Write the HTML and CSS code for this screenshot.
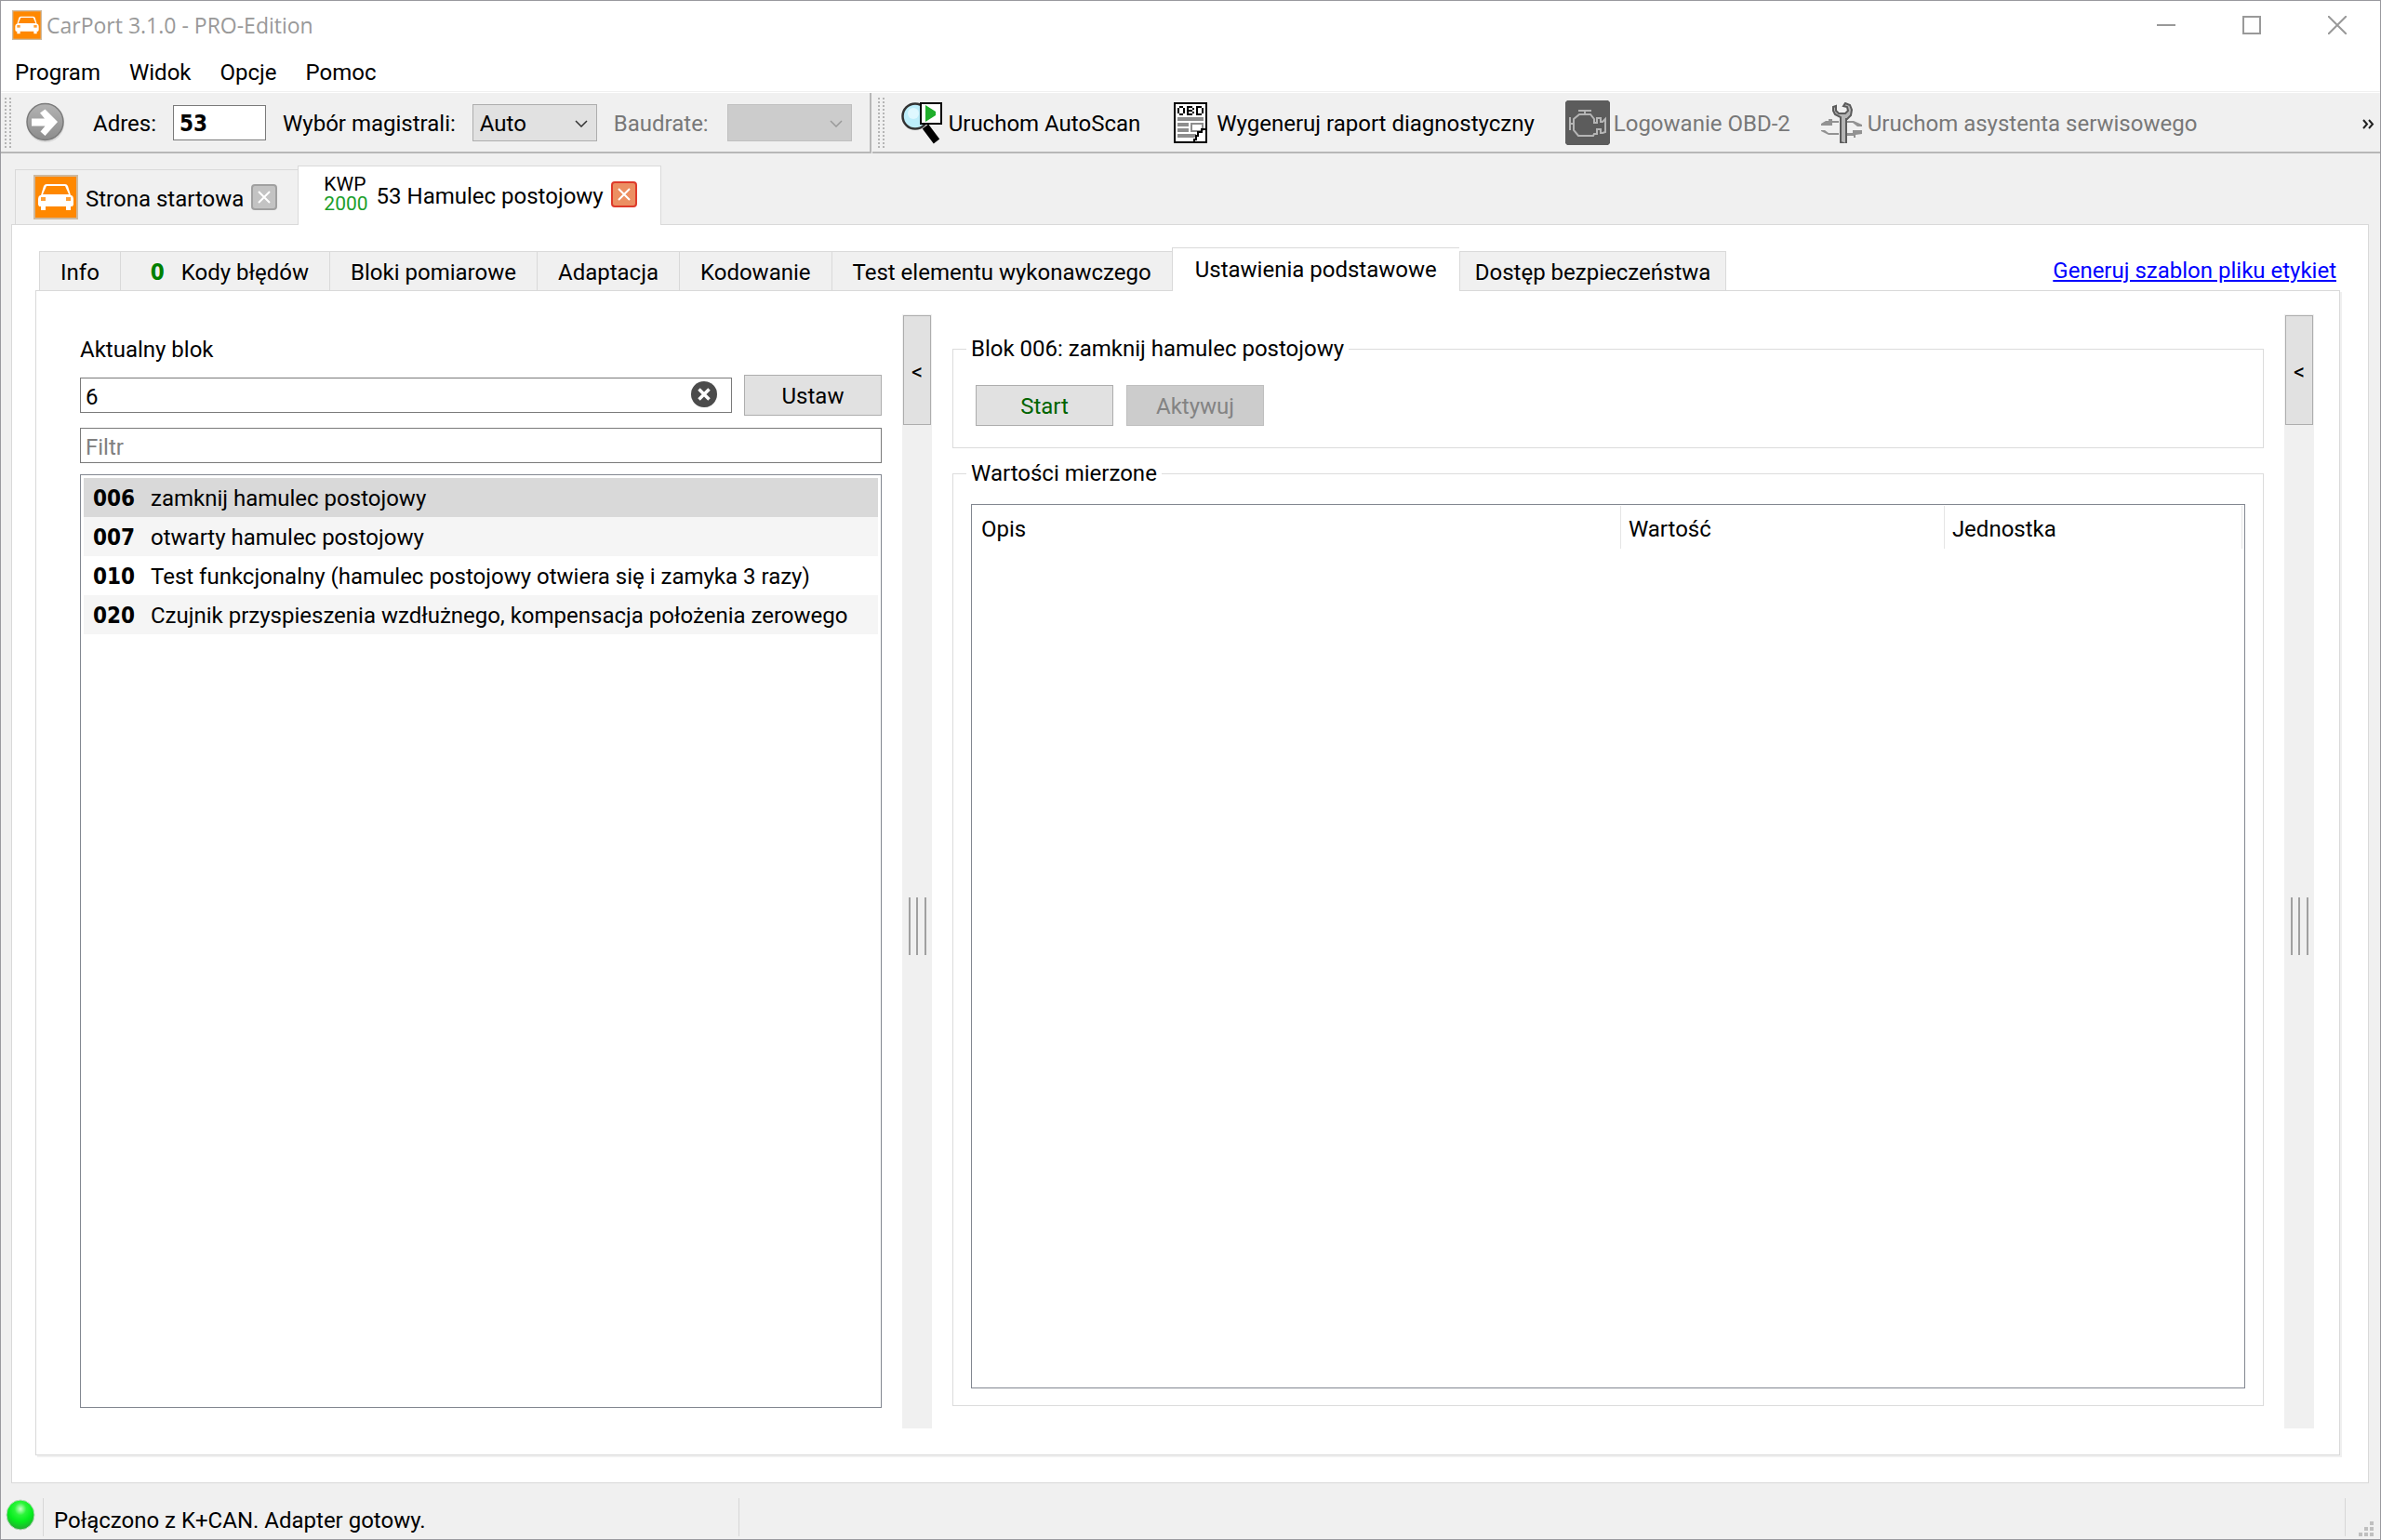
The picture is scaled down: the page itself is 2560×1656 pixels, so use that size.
FILE: index.html
```html
<!DOCTYPE html>
<html lang="pl">
<head>
    <meta charset="UTF-8">
    <meta name="viewport" content="width=device-width, initial-scale=1.0">
    <title>CarPort 3.1.0 - PRO-Edition</title>
    <link rel="stylesheet" href="styles.css">
</head>
<body>
    <svg class="defs" width="0" height="0">
        <symbol id="car" viewBox="0 0 48 48">
            <rect x="1" y="1" width="46" height="46" fill="#ff8800" stroke="#cdb99f" stroke-width="2"/>
            <path d="M14 10h20q2 0 3 2l3 10h1q2 1 2 4v6l-1 2H6l-1-2v-6q0-3 2-4h1l3-10q1-2 3-2z" fill="#fff"/>
            <path d="M14 12h20l4 9H10z" fill="#ff8800"/>
            <rect x="8" y="24" width="5" height="4" fill="#ff9f33"/>
            <rect x="35" y="24" width="5" height="4" fill="#ff9f33"/>
            <path d="M8 33h5v5H8zM35 33h5v5h-5z" fill="#fff"/>
        </symbol>
    </svg>

    <!-- title bar -->
    <header class="titlebar">
        <svg class="app-icon"><use href="#car"/></svg>
        <h1>CarPort 3.1.0 - PRO-Edition</h1>
        <div class="window-buttons">
            <button type="button" aria-label="Minimalizuj"><svg width="20" height="20"><path d="M0 10h20"/></svg></button>
            <button type="button" aria-label="Maksymalizuj"><svg width="20" height="20"><path d="M1 1h18v18H1z"/></svg></button>
            <button type="button" aria-label="Zamknij"><svg width="20" height="20"><path d="M0 0l20 20M20 0L0 20"/></svg></button>
        </div>
    </header>

    <nav class="menubar">
        <button type="button">Program</button>
        <button type="button">Widok</button>
        <button type="button">Opcje</button>
        <button type="button">Pomoc</button>
    </nav>

    <!-- toolbars -->
    <div class="toolbars">
        <div class="toolbar address-bar">
            <span class="grip"></span>
            <button type="button" class="go" aria-label="Otwórz">
                <svg width="42" height="44" viewBox="0 0 42 44">
                    <defs>
                        <linearGradient id="goFill" x1="0" y1="0" x2="0" y2="1">
                            <stop offset="0" stop-color="#b4b4b4"/>
                            <stop offset="1" stop-color="#8c8c8c"/>
                        </linearGradient>
                    </defs>
                    <circle cx="21" cy="23" r="20" fill="#d8d8d8"/>
                    <circle cx="20.500" cy="21" r="19.500" fill="url(#goFill)" stroke="#7b7b7b" stroke-width="1.500"/>
                    <path d="M6 17.500h14l-5-6 5.500-4 13.500 13.500-13.500 15-5-4.500 5-6H6z" fill="#fff"/>
                </svg>
            </button>
            <label for="address" class="address-label">Adres:</label>
            <input type="text" id="address" class="address" value="53">
            <label for="bus" class="bus-label">Wybór magistrali:</label>
            <div class="combo">
                <select id="bus"><option>Auto</option></select>
                <svg class="chevron" width="14" height="8"><path d="M1 1l6 6 6-6"/></svg>
            </div>
            <label for="baud" class="baud-label disabled">Baudrate:</label>
            <div class="combo disabled">
                <select id="baud" disabled><option></option></select>
                <svg class="chevron" width="14" height="8"><path d="M1 1l6 6 6-6"/></svg>
            </div>
        </div>
        <div class="toolbar action-bar">
            <span class="grip"></span>
            <button type="button" class="tool">
                <svg width="48" height="48" viewBox="0 0 48 48">
                    <path d="M27 28l12 16" stroke="#000" stroke-width="8" />
                    <circle cx="16" cy="17" r="13.500" fill="#bdeefb" stroke="#333" stroke-width="2.500"/>
                    <circle cx="14" cy="14" r="6" fill="#dff8ff"/>
                    <rect x="22" y="3" width="22" height="22" fill="#fff" stroke="#000" stroke-width="2"/>
                    <path d="M27 5l11 7v4l-11 7z" fill="#1fae2b"/>
                </svg>
                <span>Uruchom AutoScan</span>
            </button>
            <button type="button" class="tool report">
                <svg width="36" height="44" viewBox="0 0 36 44">
                    <path d="M1 1h34v42H1z" fill="#fff" stroke="#000" stroke-width="2"/>
                    <path d="M6 4h4v2h2v6h-2v2H6v-2H4V6h2zM6 6v6h4V6zM14 4h6v2h2v2h-2v2h2v2h-2v2h-6zM16 6v2h4V6zM16 10v2h4v-2zM24 4h6v2h2v6h-2v2h-6zM26 6v6h4V6z" fill="#000" fill-rule="evenodd"/>
                    <path d="M4 16h28v4H4zM4 22h12v4H4zM4 28h12v4H4zM4 34h20v4H4z" fill="#8d8d8d"/>
                    <rect x="19" y="23" width="12" height="8" fill="#fff" stroke="#8d8d8d" stroke-width="2"/>
                    <path d="M34 28v14H20l6-10h4z" fill="#fff"/>
                    <path d="M34 29h-4v3h-4v4h-2v4h-2v3" fill="none" stroke="#000" stroke-width="2"/>
                </svg>
                <span>Wygeneruj raport diagnostyczny</span>
            </button>
            <button type="button" class="tool logging" disabled>
                <svg width="48" height="48" viewBox="0 0 48 48">
                    <path d="M2 0h44l2 2v44l-2 2H2l-2-2V2z" fill="#5c5c5c"/>
                    <path d="M14 11h14M21 11v4M15 15h12l4 5v4h3v-5h4v4h2l3-3v14l-3 1h-2v-4h-4v5h-3l-1 2H14l-5-6V20zM5 18v14M5 25h4" fill="none" stroke="#b5b5b5" stroke-width="2"/>
                </svg>
                <span>Logowanie OBD-2</span>
            </button>
            <button type="button" class="tool service" disabled>
                <svg width="44" height="44" viewBox="0 0 44 44">
                    <path d="M0 23l5-3h3v-2h4v2h7v2h-7v3H0zM26 20h9l9 4v2h-5l-5-4h-8zM0 30h4l4 3h11v2H8l-8-4zM26 33h8v-3h10v4l-7 1v3h-2v-2h-9z" fill="#929292"/>
                    <path d="M21 43V16l-6-3-2-4V5l3-1v5l3 3h7l3-3-1-4-4-1 2-3 5 2 2 5-1 6-4 4h-1v27z" fill="#b4b4b4" stroke="#5b5b5b" stroke-width="2"/>
                </svg>
                <span>Uruchom asystenta serwisowego</span>
            </button>
            <button type="button" class="more" aria-label="Więcej">
                <svg width="13" height="11"><path d="M1 1l4 4.500-4 4.500M7 1l4 4.500-4 4.500"/></svg>
            </button>
        </div>
    </div>

    <!-- documents -->
    <div class="doc-tabs" role="tablist">
        <div class="doc-tab" role="tab">
            <svg class="doc-icon"><use href="#car"/></svg>
            <span class="doc-title">Strona startowa</span>
            <button type="button" class="close" aria-label="Zamknij kartę"><svg width="14" height="14"><path d="M1 1l12 12M13 1L1 13"/></svg></button>
        </div>
        <div class="doc-tab active" role="tab" aria-selected="true">
            <span class="protocol">KWP<b>2000</b></span>
            <span class="doc-title">53 Hamulec postojowy</span>
            <button type="button" class="close red" aria-label="Zamknij kartę"><svg width="14" height="14"><path d="M1 1l12 12M13 1L1 13"/></svg></button>
        </div>
    </div>

    <main class="doc">
        <div class="tabs" role="tablist">
            <button type="button" class="tab" role="tab">Info</button>
            <button type="button" class="tab faults" role="tab"><b>0</b>Kody błędów</button>
            <button type="button" class="tab" role="tab">Bloki pomiarowe</button>
            <button type="button" class="tab" role="tab">Adaptacja</button>
            <button type="button" class="tab" role="tab">Kodowanie</button>
            <button type="button" class="tab" role="tab">Test elementu wykonawczego</button>
            <button type="button" class="tab active" role="tab" aria-selected="true">Ustawienia podstawowe</button>
            <button type="button" class="tab last" role="tab">Dostęp bezpieczeństwa</button>
            <a href="#" class="label-link">Generuj szablon pliku etykiet</a>
        </div>

        <div class="pane">
            <section class="blocks">
                <label for="block">Aktualny blok</label>
                <div class="block-row">
                    <div class="block-field">
                        <input type="text" id="block" value="6">
                        <button type="button" class="clear" aria-label="Wyczyść">
                            <svg width="28" height="28"><circle cx="14" cy="14" r="14" fill="#4b4b4b"/><path d="M8.500 8.500l11 11M19.500 8.500l-11 11" stroke="#fff" stroke-width="3.500"/></svg>
                        </button>
                    </div>
                    <button type="button" class="btn">Ustaw</button>
                </div>
                <input type="text" class="filter" placeholder="Filtr" aria-label="Filtr">
                <ul class="block-list">
                    <li class="selected"><b>006</b>zamknij hamulec postojowy</li>
                    <li><b>007</b>otwarty hamulec postojowy</li>
                    <li><b>010</b>Test funkcjonalny (hamulec postojowy otwiera się i zamyka 3 razy)</li>
                    <li><b>020</b>Czujnik przyspieszenia wzdłużnego, kompensacja położenia zerowego</li>
                </ul>
            </section>

            <div class="splitter">
                <button type="button">&lt;</button>
                <span class="handle"></span>
            </div>

            <section class="values">
                <fieldset>
                    <legend>Blok 006: zamknij hamulec postojowy</legend>
                    <div class="actions">
                        <button type="button" class="btn start">Start</button>
                        <button type="button" class="btn" disabled>Aktywuj</button>
                    </div>
                </fieldset>
                <fieldset class="measured">
                    <legend>Wartości mierzone</legend>
                    <div class="table-box">
                        <table>
                            <thead>
                                <tr>
                                    <th class="col-name">Opis</th>
                                    <th class="col-value">Wartość</th>
                                    <th class="col-unit">Jednostka</th>
                                </tr>
                            </thead>
                            <tbody></tbody>
                        </table>
                    </div>
                </fieldset>
            </section>

            <div class="splitter">
                <button type="button">&lt;</button>
                <span class="handle"></span>
            </div>
        </div>
    </main>

    <footer class="statusbar">
        <div class="status-led">
            <svg width="32" height="34">
                <defs>
                    <radialGradient id="led" cx="0.5" cy="0.3" r="0.7">
                        <stop offset="0" stop-color="#c8ffc8"/>
                        <stop offset="0.3" stop-color="#2cf53a"/>
                        <stop offset="0.6" stop-color="#05ee1d"/>
                        <stop offset="1" stop-color="#24a832"/>
                    </radialGradient>
                </defs>
                <ellipse cx="16" cy="17" rx="15" ry="16" fill="url(#led)" stroke="#b9d9bb"/>
            </svg>
        </div>
        <div class="status-text">Połączono z K+CAN. Adapter gotowy.</div>
        <div class="status-space"></div>
        <svg class="size-grip" width="16" height="16"><path d="M12 0h4v4h-4zM6 6h4v4H6zM12 6h4v4h-4zM0 12h4v4H0zM6 12h4v4H6zM12 12h4v4h-4z" fill="#bfbfbf"/></svg>
    </footer>
</body>
</html>
```
FILE: styles.css
```css
* {
    box-sizing: border-box;
}
body {
    margin: 0;
    height: 100vh;
    display: flex;
    flex-direction: column;
    background-color: #f0f0f0;
    border: 1px solid #99999e;
    color: #000;
    font-family: Roboto, "Liberation Sans", sans-serif;
    font-size: 24px;
    line-height: 28px;
    white-space: nowrap;
    overflow: hidden;
}
button,
input,
select {
    font: inherit;
    color: inherit;
    margin: 0;
    padding: 0;
    border: 0;
    border-radius: 0;
    background: none;
}
svg {
    display: block;
    flex: none;
}
.defs {
    position: absolute;
}

/* title and menu */
.titlebar {
    display: flex;
    align-items: center;
    height: 58px;
    padding: 0 20px 6px 12px;
    background-color: #fff;
}
.app-icon {
    width: 32px;
    height: 32px;
}
.titlebar h1 {
    margin: 0 auto 0 5px;
    color: #999;
    font-family: "Open Sans", "Noto Sans", sans-serif;
    font-size: 23px;
    font-weight: normal;
}
.window-buttons {
    display: flex;
}
.window-buttons button {
    display: flex;
    justify-content: center;
    width: 92px;
}
.window-buttons button:last-child {
    width: 52px;
    margin-left: 20px;
}
.window-buttons path {
    fill: none;
    stroke: #999;
    stroke-width: 2;
}
.menubar {
    display: flex;
    gap: 31px;
    height: 40px;
    padding: 0 15px 2px;
    background-color: #fff;
    border-bottom: 1px solid #f0f0f0;
}

/* toolbars */
.toolbars {
    display: flex;
    border-top: 1px solid #fff;
}
.toolbar {
    display: flex;
    align-items: center;
    height: 65px;
    border-bottom: 2px solid #b7b7b7;
}
.address-bar {
    padding: 0 19px 0 4px;
    border-right: 2px solid #b7b7b7;
}
.action-bar {
    flex: 1;
    margin-left: 1px;
    padding: 0 6px;
}
.grip {
    width: 7px;
    height: 54px;
    background-image: radial-gradient(circle at 1px 1px, #b5b5b5 1px, transparent 1px);
    background-size: 5px 4px;
}
.go {
    margin-left: 16px;
}
.toolbar label,
.tool span {
    padding-top: 3px;
}
.address-label {
    margin: 0 18px 0 30px;
}
.address {
    width: 100px;
    height: 38px;
    padding: 2px 6px 0;
    background-color: #fff;
    border: 1px solid #7a7a7a;
    font-family: "DejaVu Sans Condensed", "DejaVu Sans", sans-serif;
    font-weight: bold;
}
.bus-label {
    margin: 0 18px;
}
.baud-label {
    margin: 0 20px 0 18px;
}
.combo {
    position: relative;
    width: 134px;
    height: 40px;
}
.combo select {
    appearance: none;
    width: 100%;
    height: 100%;
    padding: 2px 7px 0;
    background-color: #e1e1e1;
    border: 1px solid #adadad;
    opacity: 1;
}
.combo.disabled select {
    background-color: #ccc;
    border-color: #bfbfbf;
}
.chevron {
    position: absolute;
    right: 10px;
    top: 17px;
    pointer-events: none;
}
.chevron path {
    fill: none;
    stroke: #333;
    stroke-width: 1.5;
}
.disabled .chevron path {
    stroke: #999;
}
.toolbar .disabled,
.tool:disabled {
    color: #787878;
}
.tool {
    display: flex;
    align-items: center;
    gap: 4px;
}
.action-bar .grip + .tool {
    margin-left: 17px;
}
.report {
    gap: 10px;
    margin-left: 36px;
}
.logging {
    margin-left: 33px;
}
.service {
    gap: 6px;
    margin-left: 33px;
}
.more {
    margin-left: auto;
    padding-top: 3px;
}
.more path {
    fill: none;
    stroke: #222;
    stroke-width: 2;
}

/* document tabs */
.doc-tabs {
    display: flex;
    align-items: flex-end;
    padding: 13px 15px 0;
}
.doc-tab {
    display: flex;
    align-items: center;
    height: 59px;
    padding: 0 22px 0 19px;
    border: 1px solid #d9d9d9;
    border-bottom: 0;
}
.doc-tab.active {
    position: relative;
    height: 64px;
    margin: 0 0 -1px -1px;
    padding: 0 25px 3px 27px;
    background-color: #fff;
}
.doc-title {
    padding-top: 3px;
}
.doc-icon {
    width: 48px;
    height: 48px;
    margin-right: 8px;
}
.doc-tab .close {
    display: flex;
    align-items: center;
    justify-content: center;
    width: 28px;
    height: 28px;
    margin-left: 8px;
    background-color: #c3c3c3;
    border: 2px solid #a0a0a0;
    border-radius: 4px;
}
.doc-tab .close.red {
    background-color: #ec8f62;
    border-color: #de3a2a;
}
.close path {
    fill: none;
    stroke: #fff;
    stroke-width: 2;
}
.protocol {
    margin-right: 9px;
    font-size: 21px;
    line-height: 21px;
}
.protocol b {
    display: block;
    color: #1b9e2b;
    font-weight: normal;
}

/* document */
.doc {
    flex: 1;
    display: flex;
    flex-direction: column;
    min-height: 0;
    margin: 0 12px 0 11px;
    padding: 15px 30px 29px 25px;
    background-color: #fff;
    border: 1px solid #d9d9d9;
}
.tabs {
    display: flex;
    align-items: flex-end;
    height: 56px;
    margin-bottom: -1px;
    padding: 0 4px;
}
.tab {
    height: 43px;
    padding: 2px 22px 0;
    background-color: #f0f0f0;
    border: 1px solid #d9d9d9;
    border-right: 0;
}
.tab.faults b {
    margin: 0 18px 0 10px;
    color: #008000;
    font-family: "DejaVu Sans Condensed", "DejaVu Sans", sans-serif;
}
.tab.active {
    position: relative;
    height: 47px;
    padding: 0 24px;
    background-color: #fff;
    border-bottom: 0;
}
.tab.last {
    padding: 2px 16px 0;
    border-right: 1px solid #d9d9d9;
}
.label-link {
    margin: 0 0 8px auto;
    color: #0000ff;
}
.pane {
    flex: 1;
    display: flex;
    min-height: 0;
    padding: 25px 27px 28px 47px;
    border: 1px solid #d9d9d9;
    box-shadow: 2px 2px 0 #f0f0f0;
}

/* block list */
.blocks {
    flex: 862 1 0;
    display: flex;
    flex-direction: column;
    min-width: 0;
    padding: 24px 0 22px;
}
.block-row {
    display: flex;
    align-items: center;
    gap: 13px;
    margin: 13px 0;
}
.block-field {
    position: relative;
    flex: 1;
}
.blocks input {
    display: block;
    width: 100%;
    height: 38px;
    padding: 3px 5px 0;
    background-color: #fff;
    border: 1px solid #7a7a7a;
}
.blocks input::placeholder {
    color: #808080;
    opacity: 1;
}
.clear {
    position: absolute;
    right: 16px;
    top: 4px;
}
.btn {
    width: 148px;
    height: 44px;
    padding-top: 2px;
    background-color: #e1e1e1;
    border: 1px solid #adadad;
}
.btn:disabled {
    background-color: #ccc;
    border-color: #bfbfbf;
    color: #838383;
}
.start {
    color: #006400;
}
.block-list {
    flex: 1;
    margin: 12px 0 0;
    padding: 3px;
    border: 1px solid #828790;
    list-style: none;
    overflow: auto;
}
.block-list li {
    padding: 8px 10px 6px;
}
.block-list li:nth-child(even) {
    background-color: #f5f5f5;
}
.block-list li.selected {
    background-color: #d9d9d9;
}
.block-list b {
    display: inline-block;
    width: 62px;
    font-family: "DejaVu Sans Condensed", "DejaVu Sans", sans-serif;
    line-height: 24px;
}

.splitter {
    display: flex;
    flex-direction: column;
    align-items: center;
    width: 32px;
    margin: 0 22px;
    padding: 1px;
    background-color: #f0f0f0;
}
.splitter:last-child {
    margin-right: 0;
}
.splitter button {
    width: 100%;
    height: 118px;
    padding-top: 4px;
    background-color: #e1e1e1;
    border: 1px solid #adadad;
}
.handle {
    width: 19px;
    height: 62px;
    margin: auto;
    border: solid #a0a0a0;
    border-width: 0 2px;
    background: linear-gradient(#a0a0a0, #a0a0a0) center / 2px 100% no-repeat;
}

/* measured values */
.values {
    flex: 1410 1 0;
    display: flex;
    flex-direction: column;
    min-width: 0;
    padding: 24px 0;
}
fieldset {
    margin: 0;
    padding: 26px 24px 23px;
    border: 1px solid #dcdcdc;
}
legend {
    padding: 0 5px;
    margin-left: -10px;
    line-height: 26px;
}
.actions {
    display: flex;
    gap: 14px;
}
.measured {
    flex: 1;
    display: flex;
    flex-direction: column;
    margin-top: 14px;
    padding: 20px 19px 18px;
}
.measured legend {
    margin-left: -5px;
}
.table-box {
    flex: 1;
    padding: 1px 2px;
    border: 1px solid #828790;
}
table {
    width: 100%;
    border-collapse: collapse;
    table-layout: fixed;
}
th {
    height: 46px;
    padding: 3px 8px 0;
    border-right: 1px solid #e5e5e5;
    font-weight: normal;
    text-align: left;
}
.col-name {
    width: 51%;
}
.col-value {
    width: 348px;
}

/* status bar */
.statusbar {
    display: flex;
    align-items: center;
    margin-top: 16px;
    padding: 0 7px 3px 5px;
}
.status-led,
.status-text,
.status-space {
    display: flex;
    align-items: center;
    height: 41px;
    border-right: 1px solid #d7d7d7;
}
.status-led {
    align-items: flex-start;
    width: 41px;
    padding-top: 1px;
}
.status-text {
    width: 748px;
    padding: 6px 0 0 11px;
}
.status-space {
    flex: 1;
}
.size-grip {
    align-self: flex-end;
    margin-left: 14px;
}
```
